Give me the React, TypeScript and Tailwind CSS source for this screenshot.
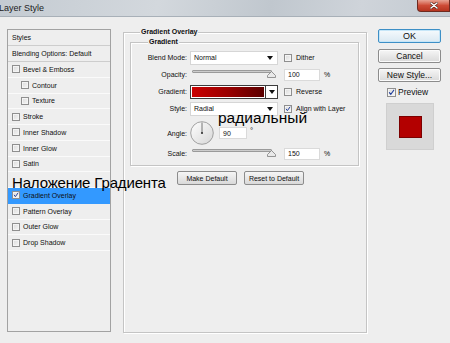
import React from "react";

function Check({ checked = false, className = "h-[8px] w-[8px]" }: { checked?: boolean; className?: string }) {
  return (
    <span
      className={`inline-flex shrink-0 items-center justify-center border border-[#8f8f8f] bg-gradient-to-br from-[#dadada] to-[#f7f7f7] shadow-[inset_0_0_0_1px_#f4f4f4] ${className}`}
    >
      {checked && (
        <svg viewBox="0 0 8 8" className="h-full w-full" aria-hidden>
          <path d="M1.6 4.2L3.2 6.2L6.6 1.4" fill="none" stroke="#23409c" strokeWidth="1.3" strokeLinecap="round" />
        </svg>
      )}
    </span>
  );
}

function Caret() {
  return (
    <svg viewBox="0 0 6 4" className="h-[4px] w-[6px]" aria-hidden>
      <path d="M0 0h6L3 4z" fill="#111" />
    </svg>
  );
}

function Dropdown({ value }: { value: string }) {
  return (
    <div className="ml-[3px] flex h-[14px] w-[88px] items-center justify-between border border-[#d6d6d6] bg-white pl-[3px] pr-[4px]">
      <span>{value}</span>
      <Caret />
    </div>
  );
}

function Slider() {
  return (
    <div className="ml-[3px] flex h-[10px] w-[88px] flex-col">
      <div className="ml-[2px] h-[3px] w-[80px] rounded-[1px] border border-[#9a9a9a] bg-gradient-to-b from-[#b5b5b5] to-[#e4e4e4]" />
      <svg viewBox="0 0 9 7" className="-mt-[2px] ml-[77px] h-[7px] w-[9px]" aria-hidden>
        <path d="M4.5 0.5L8.5 4.5V6.5H0.5V4.5Z" fill="#e9e9e9" stroke="#7d7d7d" strokeWidth="0.8" />
      </svg>
    </div>
  );
}

function NumField({ value, className = "w-[36px]" }: { value: string; className?: string }) {
  return (
    <div className={`flex h-[12px] items-center border border-[#dadada] bg-white pl-[3px] ${className}`}>{value}</div>
  );
}

function Label({ children }: { children: React.ReactNode }) {
  return <span className="w-[56px] shrink-0 text-right">{children}</span>;
}

const effects: { name: string; indent?: boolean; checked?: boolean; active?: boolean; hidden?: boolean }[] = [
  { name: "Bevel & Emboss" },
  { name: "Contour", indent: true },
  { name: "Texture", indent: true },
  { name: "Stroke" },
  { name: "Inner Shadow" },
  { name: "Inner Glow" },
  { name: "Satin" },
  { name: "Color Overlay", hidden: true },
  { name: "Gradient Overlay", checked: true, active: true },
  { name: "Pattern Overlay" },
  { name: "Outer Glow" },
  { name: "Drop Shadow" },
];

function SideButton({ children, primary = false, className = "" }: { children: React.ReactNode; primary?: boolean; className?: string }) {
  return (
    <div
      className={`flex h-[14px] items-center justify-center rounded-[2px] border text-[8.5px] ${
        primary
          ? "border-[#3d8fc6] bg-gradient-to-b from-[#f5fafd] to-[#dbe9f2] shadow-[inset_0_0_0_1px_#c6e6f8]"
          : "border-[#8c8c8c] bg-gradient-to-b from-[#f6f6f6] to-[#dadada] shadow-[inset_0_0_0_1px_#fbfbfb]"
      } ${className}`}
    >
      {children}
    </div>
  );
}

export default function App() {
  return (
    <div className="relative h-[343px] w-[450px] overflow-hidden bg-[#eeeeee] font-['Liberation_Sans',Arial,sans-serif] text-[7px] leading-none text-[#0f0f0f]">
      {/* window title bar */}
      <div className="flex h-[17px] items-start justify-between border-b border-[#a8b0b8] bg-[linear-gradient(100deg,#c4cbd2_0%,#d3d8dd_35%,#c0c7ce_60%,#cfd4da_80%,#c3cad1_100%)]">
        <span className="-ml-[1px] mt-[3px] text-[9px] leading-[10px] text-[#1c1c1c]">Layer Style</span>
        <div className="flex h-[12px] w-[33px] items-center justify-center rounded-bl-[4px] border border-t-0 border-[#6e2a20] bg-gradient-to-b from-[#e7a394] via-[#cd4b36] to-[#b5341f]">
          <svg viewBox="0 0 8 7" className="h-[7px] w-[8px]" aria-hidden>
            <path d="M1 1L7 6M7 1L1 6" stroke="#4a1a12" strokeWidth="2.6" strokeLinecap="round" />
            <path d="M1 1L7 6M7 1L1 6" stroke="#fff" strokeWidth="1.5" strokeLinecap="round" />
          </svg>
        </div>
      </div>

      <div className="flex items-start">
        {/* styles list */}
        <div className="ml-[7px] mt-[12px] h-[303px] w-[104px] border border-[#a2a2a2]">
          <div className="flex h-[16px] items-center border-b border-[#cdcdcd] pl-[4px]">Styles</div>
          <div className="flex h-[16px] items-center border-b border-[#cdcdcd] pl-[4px]">Blending Options: Default</div>
          {effects.map((e) => (
            <div
              key={e.name}
              className={`flex h-[15.75px] items-center border-b ${e.active ? "border-[#3399ff] bg-[#3399ff]" : "border-[#fafafa]"} ${
                e.indent ? "pl-[13px]" : "pl-[4px]"
              }`}
            >
              {!e.hidden && (
                <>
                  <Check checked={e.checked} />
                  <span className="ml-[3px]">{e.name}</span>
                </>
              )}
            </div>
          ))}
        </div>

        {/* Gradient Overlay group */}
        <div className="relative ml-[12px] mt-[15px] h-[301px] w-[244px] border border-[#c4c4c4] shadow-[inset_1px_1px_0_#fff,1px_1px_0_#fff]">
          <span className="absolute -top-[5px] left-[16px] bg-[#eeeeee] px-[1px] font-bold">Gradient Overlay</span>

          <div className="relative ml-[6px] mt-[9px] w-[229px] border border-[#c4c4c4] pb-[3px] pt-[6px] shadow-[inset_1px_1px_0_#fff,1px_1px_0_#fff]">
            <span className="absolute -top-[5px] left-[17px] bg-[#eeeeee] px-[1px] font-bold">Gradient</span>

            <div className="flex h-[17px] items-center">
              <Label>Blend Mode:</Label>
              <Dropdown value="Normal" />
              <Check className="ml-[6px] h-[8px] w-[8px]" />
              <span className="ml-[4px]">Dither</span>
            </div>

            <div className="flex h-[17px] items-center">
              <Label>Opacity:</Label>
              <Slider />
              <NumField value="100" className="ml-[6px] w-[36px]" />
              <span className="ml-[4px]">%</span>
            </div>

            <div className="flex h-[17px] items-center">
              <Label>Gradient:</Label>
              <div className="ml-[3px] flex h-[14px] w-[88px] border border-[#3c3c3c]">
                <div className="flex-1 bg-gradient-to-r from-[#cc0000] via-[#9a0000] to-[#5a0000] shadow-[inset_0_0_0_1px_#fff]" />
                <div className="flex w-[12px] items-center justify-center border-l border-[#3c3c3c] bg-white">
                  <Caret />
                </div>
              </div>
              <Check className="ml-[6px] h-[8px] w-[8px]" />
              <span className="ml-[4px]">Reverse</span>
            </div>

            <div className="flex h-[17px] items-center">
              <Label>Style:</Label>
              <Dropdown value="Radial" />
              <Check checked className="ml-[6px] h-[8px] w-[8px]" />
              <span className="ml-[4px]">Align with Layer</span>
            </div>

            <div className="mt-[4px] flex h-[24px] items-center">
              <Label>Angle:</Label>
              <svg viewBox="0 0 24 24" className="ml-[3px] h-[24px] w-[24px]" aria-hidden>
                <defs>
                  <linearGradient id="dial" x1="0" y1="0" x2="1" y2="1">
                    <stop offset="0" stopColor="#ffffff" />
                    <stop offset="1" stopColor="#d6d6d6" />
                  </linearGradient>
                </defs>
                <circle cx="12" cy="12" r="11.3" fill="url(#dial)" stroke="#8d8d8d" strokeWidth="0.8" />
                <path d="M12 12V1.5" stroke="#555" strokeWidth="0.8" />
                <circle cx="12" cy="12" r="1.1" fill="#333" />
              </svg>
              <NumField value="90" className="ml-[5px] w-[28px]" />
              <span className="-mt-[4px] ml-[3px] text-[8px]">°</span>
            </div>

            <div className="flex h-[17px] items-center">
              <Label>Scale:</Label>
              <Slider />
              <NumField value="150" className="ml-[6px] w-[36px]" />
              <span className="ml-[4px]">%</span>
            </div>
          </div>

          <div className="ml-[53px] mt-[5px] flex gap-[7px]">
            <div className="flex h-[14px] w-[60px] items-center justify-center rounded-[2px] border border-[#8c8c8c] bg-gradient-to-b from-[#f6f6f6] to-[#d9d9d9]">
              Make Default
            </div>
            <div className="flex h-[14px] w-[60px] items-center justify-center rounded-[2px] border border-[#8c8c8c] bg-gradient-to-b from-[#f6f6f6] to-[#d9d9d9]">
              Reset to Default
            </div>
          </div>
        </div>

        {/* right column */}
        <div className="ml-[11px] mt-[12px] flex w-[63px] flex-col">
          <SideButton primary className="text-[9px]">OK</SideButton>
          <SideButton className="mt-[6px]">Cancel</SideButton>
          <SideButton className="mt-[5px]">New Style...</SideButton>
          <div className="ml-[9px] mt-[6px] flex items-center">
            <Check checked className="h-[9px] w-[9px]" />
            <span className="ml-[2px] text-[8.5px]">Preview</span>
          </div>
          <div className="ml-[8px] mt-[6px] flex h-[47px] w-[48px] items-center justify-center border border-[#cfcfcf] bg-[#d9d9d9]">
            <div className="h-[22px] w-[23px] border border-[#7c0000] bg-[#b30000]" />
          </div>
        </div>
      </div>

      {/* annotations laid over the dialog */}
      <span className="absolute left-[12px] top-[175px] whitespace-nowrap text-[15px] leading-none tracking-[-0.15px] text-black">
        Наложение Градиента
      </span>
      <span className="absolute left-[218px] top-[110px] whitespace-nowrap text-[15.5px] leading-none text-black">
        радиальный
      </span>
    </div>
  );
}
